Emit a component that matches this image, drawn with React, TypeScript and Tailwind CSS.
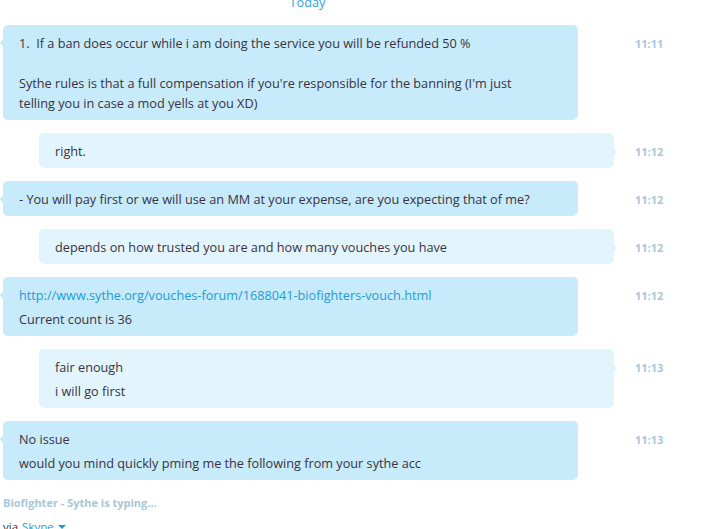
import React from 'react';

type Msg = {
  out: boolean;
  time: string;
  lines: React.ReactNode[];
};

const messages: Msg[] = [
  {
    out: false,
    time: '11:11',
    lines: [
      <>1.&nbsp; If a ban does occur while i am doing the service you will be refunded 50 %</>,
      <>&nbsp;</>,
      <>
        Sythe rules is that a full compensation if you're responsible for the banning (I'm just
        <br />
        telling you in case a mod yells at you XD)
      </>,
    ],
  },
  { out: true, time: '11:12', lines: ['right.'] },
  { out: false, time: '11:12', lines: ['- You will pay first or we will use an MM at your expense, are you expecting that of me?'] },
  { out: true, time: '11:12', lines: ['depends on how trusted you are and how many vouches you have'] },
  {
    out: false,
    time: '11:12',
    lines: [
      <span className="text-[#1d9bd8]">http://www.sythe.org/vouches-forum/1688041-biofighters-vouch.html</span>,
      'Current count is 36',
    ],
  },
  { out: true, time: '11:13', lines: ['fair enough', 'i will go first'] },
  { out: false, time: '11:13', lines: ['No issue', 'would you mind quickly pming me the following from your sythe acc'] },
];

function Bubble({ msg }: { msg: Msg }) {
  // first bubble carries a blank paragraph, so tighter spacing there
  const tight = msg.lines.length === 3;
  return (
    <div className="flex items-start">
      <div className="w-[620px]">
        <div
          className={`relative w-[575px] rounded-[5px] px-4 pt-[8px] pb-[7px] ${
            msg.out ? 'ml-[39px] bg-[#e3f5fc]' : 'ml-[3px] bg-[#c7ebfa]'
          }`}
        >
          {msg.out ? (
            <span className="absolute -right-[3px] top-[15px] h-0 w-0 border-y-[4px] border-l-[3px] border-y-transparent border-l-[#e3f5fc]" />
          ) : (
            <span className="absolute -left-[3px] top-[14px] h-0 w-0 border-y-[4px] border-r-[3px] border-y-transparent border-r-[#c7ebfa]" />
          )}
          <div className={`flex flex-col ${tight ? 'gap-0' : 'gap-[4px]'}`}>
            {msg.lines.map((l, i) => (
              <div key={i} className="min-h-[20px] leading-[20px] whitespace-nowrap">
                {l}
              </div>
            ))}
          </div>
        </div>
      </div>
      <div className="ml-[15px] pt-[11px] text-[11px] font-bold leading-[16px] text-[#a6c7db]">
        {msg.time}
      </div>
    </div>
  );
}

export default function App() {
  return (
    <div
      className="h-[529px] w-[710px] overflow-hidden bg-white text-[12.7px] text-[#3b3140]"
      style={{ fontFamily: '"Open Sans", "Noto Sans", Arial, sans-serif' }}
    >
      {/* Day divider */}
      <div className="flex h-[25px] w-[615px] justify-center">
        <span className="-mt-[6px] text-[12.7px] leading-[16px] text-[#29a3e0]">Today</span>
      </div>

      {/* Conversation */}
      <div className="flex flex-col gap-[13px]">
        {messages.map((m, i) => (
          <Bubble key={i} msg={m} />
        ))}
      </div>

      {/* Footer */}
      <div className="ml-[3px] mt-[16px] text-[11px] font-bold leading-[14px] text-[#a8c6d8]">
        Biofighter - Sythe is typing...
      </div>
      <div className="ml-[3px] mt-[10px] flex items-center gap-1 text-[11.5px] leading-[14px]">
        <span>via</span>
        <span className="text-[#1d9bd8]">Skype</span>
        <span className="h-0 w-0 border-x-[4px] border-t-[4px] border-x-transparent border-t-[#1d9bd8]" />
      </div>
    </div>
  );
}
